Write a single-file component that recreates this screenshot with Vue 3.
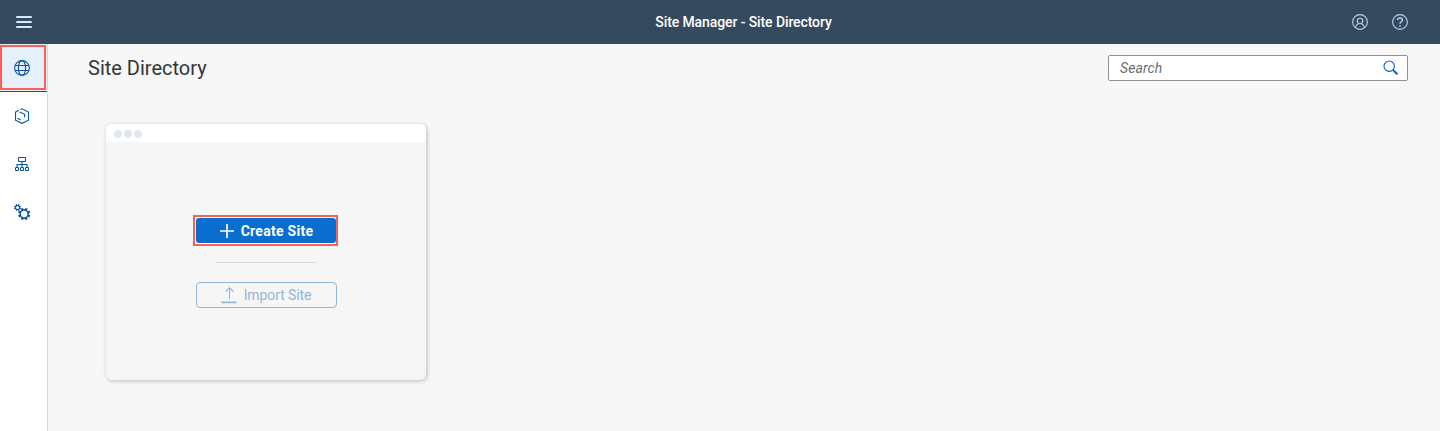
<script setup>
const items = ['globe', 'content', 'channel', 'settings']

function gear(cx, cy, inner, outer, teeth) {
  const pts = []
  for (let i = 0; i < teeth; i++) {
    const a = (i / teeth) * Math.PI * 2 + Math.PI / teeth
    const s = (Math.PI * 2) / teeth
    for (const [f, r] of [[-0.32, inner], [-0.24, outer], [0.24, outer], [0.32, inner]]) {
      pts.push(`${(cx + Math.cos(a + f * s) * r).toFixed(2)},${(cy + Math.sin(a + f * s) * r).toFixed(2)}`)
    }
  }
  return pts.join(' ')
}
const bigGear = gear(10.2, 10, 4.7, 6.2, 8)
const smallGear = gear(3.5, 3.5, 2.5, 3.6, 8)
</script>

<template>
  <div class="shell">
    <header class="bar">
      <button class="menu" aria-label="Menu"><i></i><i></i><i></i></button>
      <h1 class="title">Site Manager - Site Directory</h1>
      <div class="actions">
        <svg width="16" height="16" viewBox="0 0 16 16">
          <circle cx="8" cy="8" r="7.4" />
          <circle cx="8" cy="7" r="2.7" />
          <path d="M3.4 13.4C3.9 11.3 5.2 10.1 6.7 9.4M9.3 9.4c1.5.7 2.8 1.9 3.3 4" />
        </svg>
        <svg width="16" height="16" viewBox="0 0 16 16">
          <circle cx="8" cy="8" r="7.4" />
          <path class="thick" d="M5.6 6.1C5.6 4.7 6.6 3.9 8 3.9s2.4.8 2.4 2.1c0 1.7-2.4 1.8-2.4 3.8" />
          <path class="thick" d="M8 11.2v1.5" />
        </svg>
      </div>
    </header>
    <div class="body">
      <nav class="side">
        <div v-for="(name, i) in items" :key="name" class="item" :class="{ active: i === 0 }">
          <svg v-if="name === 'globe'" width="16" height="16" viewBox="0 0 16 16">
            <circle cx="8" cy="8" r="7.4" />
            <ellipse cx="8" cy="8" rx="3.6" ry="7.4" />
            <path d="M1.2 5.5h13.6M1.2 10.5h13.6" />
          </svg>
          <svg v-else-if="name === 'content'" width="16" height="16" viewBox="0 0 16 16">
            <path d="M4.9 2.2L1.5 4v8.2L8 15.3l6.5-3.1V4L8 .8l-1.5.7M5.6 3.9l5 2.4v3M3.5 10.3l3.2 1.7" />
          </svg>
          <svg v-else-if="name === 'channel'" width="16" height="16" viewBox="0 0 16 16">
            <rect x="4.5" y="1.5" width="7" height="4" rx=".5" />
            <path d="M8 5.5v5.7M3 11.2V8.5h10v2.7" />
            <rect x="1.5" y="11.5" width="3" height="3" rx=".7" />
            <rect x="6.5" y="11.5" width="3" height="3" rx=".7" />
            <rect x="11.5" y="11.5" width="3" height="3" rx=".7" />
          </svg>
          <svg v-else width="17" height="17" viewBox="0 0 17 17">
            <g class="gears">
              <polygon :points="bigGear" />
              <polygon :points="smallGear" />
            </g>
            <circle class="hole" cx="10.2" cy="10" r="3.2" />
            <circle class="hole" cx="3.5" cy="3.5" r="1.5" />
          </svg>
        </div>
      </nav>
      <main class="main">
        <div class="heading">
          <h2>Site Directory</h2>
          <div class="search">
            <span>Search</span>
            <svg width="16" height="16" viewBox="0 0 16 16">
              <circle cx="6.2" cy="6.2" r="5.2" />
              <path class="handle" d="M10 10l4.5 4.4" />
            </svg>
          </div>
        </div>
        <section class="card">
          <div class="dots"><i></i><i></i><i></i></div>
          <div class="card-body">
            <div class="highlight">
              <button class="create">
                <svg width="16" height="16" viewBox="0 0 16 16"><path d="M8 1v14M1 8h14" /></svg>
                <span>Create Site</span>
              </button>
            </div>
            <hr />
            <button class="import">
              <svg width="16" height="18" viewBox="0 0 16 18">
                <path d="M8.5 13V1.8M4.7 5.5l3.8-3.8 3.8 3.8" />
                <path class="base" d="M.5 16.3h15" />
              </svg>
              <span>Import Site</span>
            </button>
          </div>
        </section>
      </main>
    </div>
  </div>
</template>

<style>
body { background: #f7f7f7; }
</style>

<style scoped>
* { box-sizing: border-box; }
.shell { height: 431px; display: flex; flex-direction: column; overflow: hidden; font-family: Roboto, "Noto Sans", sans-serif; background: #f7f7f7; }
button { font: inherit; padding: 0; margin: 0; }
svg { display: block; flex: none; fill: none; stroke: currentColor; stroke-width: 1.1; }
.bar { height: 44px; flex: none; display: grid; grid-template-columns: 120px 1fr 120px; align-items: center; background: #354a5f; color: #d1e8ff; }
.menu { width: 16px; height: 12px; margin-left: 16px; border: 0; background: none; display: flex; flex-direction: column; justify-content: space-between; }
.menu i { height: 2px; width: 16px; background: #d1e8ff; border-radius: 1px; }
.title { margin: 0; padding-left: 47px; text-align: center; color: #fff; font-size: 14px; line-height: 20px; font-weight: 500; letter-spacing: -0.1px; }
.actions { display: flex; gap: 24px; justify-content: flex-end; padding-right: 32px; color: #b5d0ee; }
.thick { stroke-width: 1.5; }
.body { flex: 1; display: flex; min-height: 0; }
.side { width: 48px; flex: none; background: #fff; border-right: 1px solid #d9d9d9; color: #0854a0; }
.item { height: 48px; padding-left: 14px; display: flex; align-items: center; }
.item.active { background: #e5f0fa; border-bottom: 1px solid #0854a0; position: relative; }
.item.active::after { content: ""; box-sizing: border-box; position: absolute; left: 0; top: 1px; width: 46px; height: 45px; border: 2px solid #fa6055; }
.gears { fill: currentColor; stroke: none; }
.hole { fill: #fff; stroke: none; }
.main { flex: 1; padding: 11px 32px 0 40px; }
.heading { display: flex; justify-content: space-between; height: 26px; }
h2 { margin: 0; font-size: 20px; line-height: 26px; font-weight: 400; color: #32363a; }
.search { width: 300px; height: 26px; border: 1px solid #89919a; border-radius: 2px; background: #fff; display: flex; align-items: center; justify-content: space-between; padding: 0 8px 0 11px; color: #0a5db5; }
.search span { color: #6a6d70; font-size: 14px; font-style: italic; letter-spacing: .1px; }
.handle { stroke-width: 2; }
.card { width: 320px; height: 256px; margin: 43px 0 0 18px; border-radius: 6px; background: #f6f6f6; overflow: hidden; box-shadow: 1px 1px 4px rgba(0, 0, 0, .25); }
.dots { height: 18px; background: #fff; display: flex; gap: 2px; padding: 6px 0 0 8px; }
.dots i { width: 8px; height: 8px; border-radius: 50%; background: #e1e7ee; }
.card-body { display: flex; flex-direction: column; align-items: center; padding-top: 73px; }
.highlight { width: 145px; height: 31px; margin-right: 1px; border: 2px solid #fa6055; padding: 1px 0 1px 1px; background: #fff; }
.create { width: 140px; height: 25px; border: 0; border-radius: 3px; background: #0a6ed1; color: #fff; display: flex; align-items: center; justify-content: center; gap: 6px; font-size: 14px; font-weight: 700; letter-spacing: .28px; }
.create svg { stroke-width: 1.7; }
hr { width: 100px; height: 1px; border: 0; background: #d9d9d9; margin: 16px 0 19px; }
.import { width: 141px; height: 26px; border: 1px solid #94b5d6; border-radius: 4px; background: transparent; color: #94b5d6; display: flex; align-items: center; justify-content: center; gap: 7px; font-size: 14px; letter-spacing: -.1px; }
.base { stroke-width: 1.7; }
</style>
